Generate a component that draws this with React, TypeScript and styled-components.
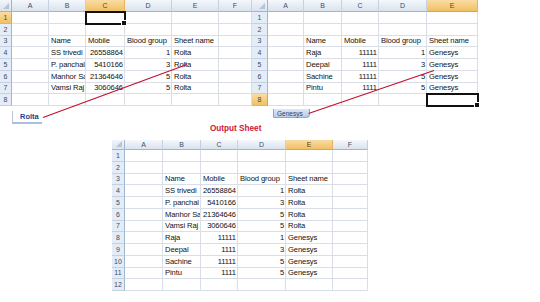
import React from 'react';
import styled, { createGlobalStyle, css } from 'styled-components';

type Cell = string | number;

const LETTERS = ['A', 'B', 'C', 'D', 'E', 'F'];
const ROW_H = 11.75;

const GlobalStyle = createGlobalStyle`
  html, body {
    margin: 0;
    padding: 0;
    background: #fff;
  }
  body {
    font-family: 'Liberation Sans', Arial, sans-serif;
  }
`;

const Page = styled.div`
  position: relative;
  width: 540px;
  height: 302px;
  overflow: hidden;
  background: #fff;
`;

const TopRow = styled.div`
  display: flex;
  align-items: flex-start;
`;

const Panel = styled.div<{ $width: number }>`
  display: flex;
  flex-direction: column;
  width: ${p => p.$width}px;
`;

const TabBar = styled.div<{ $inset: number; $top: number }>`
  display: flex;
  height: 17px;
  padding-left: ${p => p.$inset}px;
  padding-top: ${p => p.$top}px;
  box-sizing: border-box;
`;

const ActiveTab = styled.div`
  display: flex;
  align-items: center;
  height: 11px;
  padding: 0 3px 0 7px;
  border-left: 1px solid #b7c6da;
  border-bottom: 2px solid #a9c0de;
  background: #fff;
  color: #1d3f8f;
  font-size: 7.5px;
  font-weight: bold;
`;

const Tab = styled.div`
  display: flex;
  align-items: center;
  height: 8px;
  padding: 0 6px 0 3px;
  border: 1px solid #8ea8c9;
  border-top: none;
  border-radius: 0 0 4px 1px;
  background: linear-gradient(#dde7f5, #b9cde7);
  color: #2a4470;
  font-size: 6.5px;
`;

const Title = styled.div`
  height: 12px;
  padding-left: 210px;
  color: #cf1535;
  font-size: 8.2px;
  font-weight: bold;
  line-height: 12px;
`;

const BottomArea = styled.div`
  padding: 5px 0 0 112px;
`;

const Grid = styled.div<{ $cols: string; $head: number }>`
  display: grid;
  grid-template-columns: ${p => p.$cols};
  grid-template-rows: ${p => p.$head}px;
  grid-auto-rows: ${ROW_H}px;
  font-size: 7.6px;
`;

const headBase = css`
  box-sizing: border-box;
  display: flex;
  align-items: center;
  justify-content: center;
  font-size: 7px;
  color: #3b4d66;
`;

const Corner = styled.div`
  ${headBase};
  position: relative;
  background: linear-gradient(#f2f5fa, #dbe3ee);
  border-right: 1px solid #9eb6ce;
  border-bottom: 1px solid #9eb6ce;
  &::after {
    content: '';
    position: absolute;
    right: 2px;
    bottom: 2px;
    border-style: solid;
    border-width: 0 0 6px 6px;
    border-color: transparent transparent #b6c4d6 transparent;
  }
`;

const ColHead = styled.div<{ $active?: boolean }>`
  ${headBase};
  background: ${p =>
    p.$active ? 'linear-gradient(#f9dca4, #f1c063)' : 'linear-gradient(#f5f8fc, #dae2ed)'};
  border-right: 1px solid ${p => (p.$active ? '#e8b35c' : '#c5d1df')};
  border-bottom: 1px solid ${p => (p.$active ? '#e3a23f' : '#9eb6ce')};
  color: ${p => (p.$active ? '#5a4420' : '#3b4d66')};
`;

const RowHead = styled.div<{ $active?: boolean }>`
  ${headBase};
  background: ${p => (p.$active ? 'linear-gradient(#f9dca4, #f1c063)' : '#e4ecf7')};
  border-right: 1px solid ${p => (p.$active ? '#e3a23f' : '#9eb6ce')};
  border-bottom: 1px solid ${p => (p.$active ? '#e8b35c' : '#c5d1df')};
  color: ${p => (p.$active ? '#5a4420' : '#3b4d66')};
`;

const DataCell = styled.div<{ $num?: boolean; $selected?: boolean }>`
  box-sizing: border-box;
  display: flex;
  align-items: flex-end;
  justify-content: ${p => (p.$num ? 'flex-end' : 'flex-start')};
  padding: 0 1px 1px 2px;
  overflow: hidden;
  white-space: nowrap;
  border-right: 1px solid #d9dee7;
  border-bottom: 1px solid #d9dee7;
  color: #111;
  line-height: 9px;
  letter-spacing: -0.1px;
  ${p =>
    p.$selected &&
    css`
      position: relative;
      overflow: visible;
      z-index: 1;
      outline: 2px solid #111;
      outline-offset: -1px;
      &::after {
        content: '';
        position: absolute;
        right: -3px;
        bottom: -3px;
        width: 4px;
        height: 4px;
        background: #111;
        border: 1px solid #fff;
      }
    `}
`;

const Overlay = styled.svg`
  position: absolute;
  left: 0;
  top: 0;
  pointer-events: none;
`;

type SheetProps = {
  rowHead: number;
  widths: number[];
  head: number;
  rows: number;
  data: Record<number, Cell[]>;
  selCol?: number;
  selRow?: number;
};

const Sheet = ({ rowHead, widths, head, rows, data, selCol, selRow }: SheetProps) => {
  const cols = [rowHead, ...widths].map(w => `${w}px`).join(' ');
  return (
    <Grid $cols={cols} $head={head}>
      <Corner />
      {widths.map((_, i) => (
        <ColHead key={i} $active={i === selCol}>
          {LETTERS[i]}
        </ColHead>
      ))}
      {Array.from({ length: rows }, (_, r) => {
        const rowNo = r + 1;
        const values = data[rowNo] || [];
        return (
          <React.Fragment key={rowNo}>
            <RowHead $active={rowNo === selRow}>{rowNo}</RowHead>
            {widths.map((_, c) => {
              const v = c >= 1 ? values[c - 1] : undefined;
              return (
                <DataCell
                  key={c}
                  $num={typeof v === 'number'}
                  $selected={c === selCol && rowNo === selRow}
                >
                  {v}
                </DataCell>
              );
            })}
          </React.Fragment>
        );
      })}
    </Grid>
  );
};

const HEADINGS: Cell[] = ['Name', 'Mobile', 'Blood group', 'Sheet name'];

const rolta: Cell[][] = [
  ['SS trivedi', 26558864, 1, 'Rolta'],
  ['P. panchal', 5410166, 3, 'Rolta'],
  ['Manhor Sahu', 21364646, 5, 'Rolta'],
  ['Vamsi Raj', 3060646, 5, 'Rolta'],
];

const genesys: Cell[][] = [
  ['Raja', 11111, 1, 'Genesys'],
  ['Deepal', 1111, 3, 'Genesys'],
  ['Sachine', 11111, 5, 'Genesys'],
  ['Pintu', 1111, 5, 'Genesys'],
];

const toData = (list: Cell[][]) => {
  const out: Record<number, Cell[]> = { 3: HEADINGS };
  list.forEach((row, i) => {
    out[4 + i] = row;
  });
  return out;
};

export default function App() {
  return (
    <Page>
      <GlobalStyle />
      <TopRow>
        <Panel $width={252}>
          <Sheet
            rowHead={12}
            widths={[37, 37, 39, 47, 47, 33]}
            head={12}
            rows={8}
            data={toData(rolta)}
            selCol={2}
            selRow={1}
          />
          <TabBar $inset={12} $top={5}>
            <ActiveTab>Rolta</ActiveTab>
          </TabBar>
        </Panel>
        <Panel $width={226}>
          <Sheet
            rowHead={16}
            widths={[36, 38, 37, 48, 51]}
            head={12}
            rows={8}
            data={toData(genesys)}
            selCol={4}
            selRow={8}
          />
          <TabBar $inset={21} $top={3}>
            <Tab>Genesys</Tab>
          </TabBar>
        </Panel>
      </TopRow>
      <Title>Output Sheet</Title>
      <BottomArea>
        <Sheet
          rowHead={13}
          widths={[38, 38, 37, 48, 47, 35]}
          head={10}
          rows={12}
          data={toData([...rolta, ...genesys])}
          selCol={4}
        />
      </BottomArea>
      <Overlay width={540} height={302}>
        <line x1={43} y1={117.5} x2={187} y2={64.5} stroke="#c4122f" strokeWidth={1.3} />
        <line x1={308.5} y1={113.5} x2={434} y2={70.5} stroke="#c4122f" strokeWidth={1.3} />
      </Overlay>
    </Page>
  );
}
